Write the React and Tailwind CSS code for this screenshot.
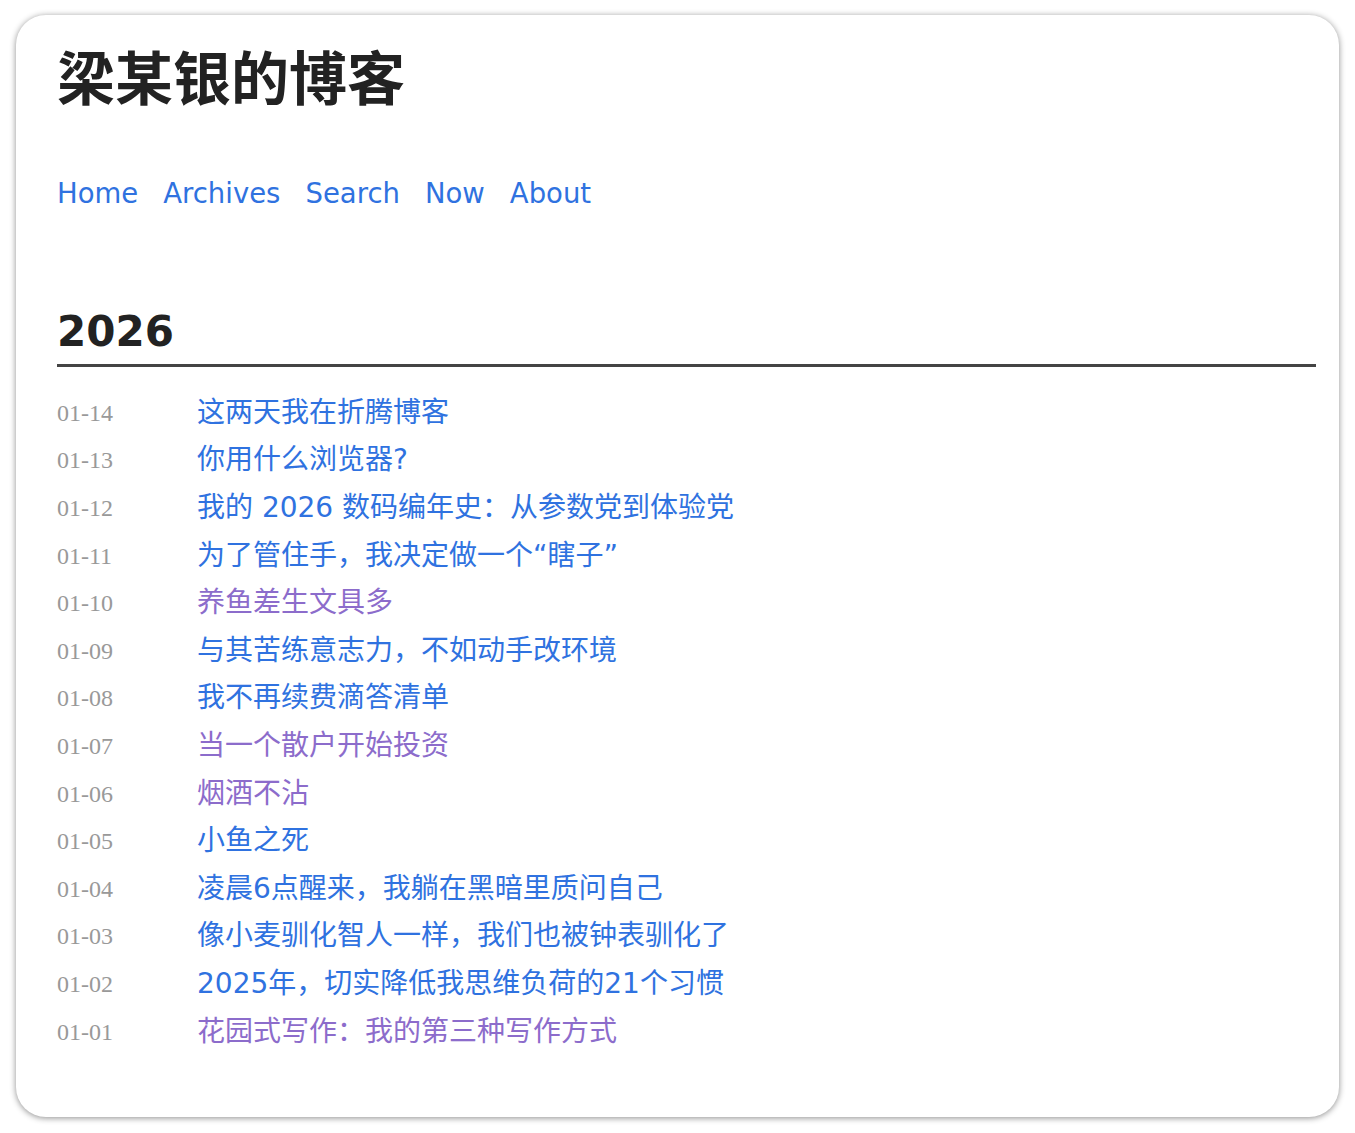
export default function App() {
  const posts = [
    ["01-14", "这两天我在折腾博客", false],
    ["01-13", "你用什么浏览器?", false],
    ["01-12", "我的 2026 数码编年史：从参数党到体验党", false],
    ["01-11", "为了管住手，我决定做一个“瞎子”", false],
    ["01-10", "养鱼差生文具多", true],
    ["01-09", "与其苦练意志力，不如动手改环境", false],
    ["01-08", "我不再续费滴答清单", false],
    ["01-07", "当一个散户开始投资", true],
    ["01-06", "烟酒不沾", true],
    ["01-05", "小鱼之死", false],
    ["01-04", "凌晨6点醒来，我躺在黑暗里质问自己", false],
    ["01-03", "像小麦驯化智人一样，我们也被钟表驯化了", false],
    ["01-02", "2025年，切实降低我思维负荷的21个习惯", false],
    ["01-01", "花园式写作：我的第三种写作方式", true],
  ];
  const sans = { fontFamily: '"DejaVu Sans", "Noto Sans CJK SC", sans-serif' };
  return (
    <div className="min-h-[1133px] w-[1355px] bg-white pt-[15px] pl-[16px]">
      <div
        className="w-[1323px] h-[1102px] rounded-[30px] bg-white shadow-[0_1px_6px_rgba(0,0,0,0.45)] pl-[41px] pr-[23px] pt-[25px]"
        style={sans}
      >
        <h1 className="text-[58px] leading-[80px] font-bold text-[#222]">梁某银的博客</h1>
        <nav className="mt-[53px] flex gap-[25px] text-[27.5px] leading-[40px] text-[#2f72e0]">
          <a>Home</a>
          <a>Archives</a>
          <a>Search</a>
          <a>Now</a>
          <a>About</a>
        </nav>
        <h2 className="mt-[94px] text-[42px] leading-[50px] font-bold text-[#222]">2026</h2>
        <div className="mt-[7px] h-[3px] bg-[#444]"></div>
        <div className="mt-[22px]">
          {posts.map(([d, t, v]) => (
            <div key={d} className="flex items-center h-[47.6px]">
              <span
                className="w-[140px] shrink-0 text-[24px] text-[#999]"
                style={{ fontFamily: '"Liberation Serif", "Noto Sans CJK SC", serif' }}
              >
                {d}
              </span>
              <a className={"text-[28px] " + (v ? "text-[#8c6ccb]" : "text-[#2f72e0]")}>{t}</a>
            </div>
          ))}
        </div>
      </div>
    </div>
  );
}
